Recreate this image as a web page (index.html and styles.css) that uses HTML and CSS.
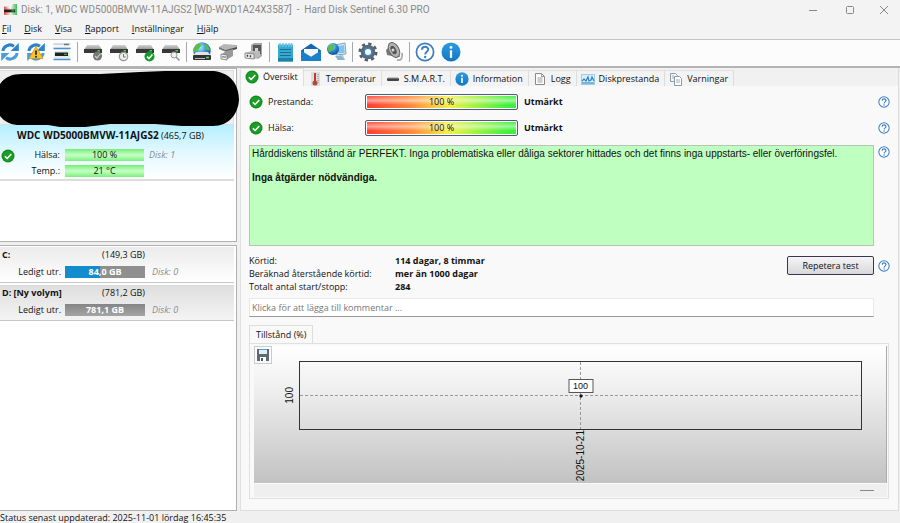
FILE: index.html
```html
<!DOCTYPE html>
<html lang="sv">
<head>
<meta charset="utf-8">
<title>Hard Disk Sentinel 6.30 PRO</title>
<link rel="stylesheet" href="styles.css">
</head>
<body>
<svg class="defs" aria-hidden="true">
  <defs>
    <linearGradient id="gDrive" x1="0" y1="0" x2="0" y2="1"><stop offset="0" stop-color="#d4d4d4"/><stop offset="1" stop-color="#8d8d8d"/></linearGradient>
    <linearGradient id="gBlue" x1="0" y1="0" x2="0" y2="1"><stop offset="0" stop-color="#2f9be0"/><stop offset="1" stop-color="#1277c4"/></linearGradient>
    <radialGradient id="gGlobe" cx=".4" cy=".3" r=".8"><stop offset="0" stop-color="#a9ecff"/><stop offset=".5" stop-color="#2c86cf"/><stop offset="1" stop-color="#0b3f83"/></radialGradient>
    <linearGradient id="gApp" x1="0" y1="0" x2="1" y2="0"><stop offset="0" stop-color="#ef4a4a"/><stop offset=".5" stop-color="#f3ece0"/><stop offset="1" stop-color="#37c05a"/></linearGradient>
  </defs>
  <symbol id="i-sync" viewBox="0 0 20 20">
    <path d="M2.8 9A7.2 7.2 0 0 1 14 4.2" fill="none" stroke="#2b83cb" stroke-width="3"/>
    <path d="M18.8 1v8h-8.2z" fill="#2b83cb"/>
    <path d="M17.2 11A7.2 7.2 0 0 1 6 15.8" fill="none" stroke="#4a9ddb" stroke-width="3"/>
    <path d="M1.2 19v-8h8.2z" fill="#4a9ddb"/>
  </symbol>
  <symbol id="i-drive" viewBox="0 0 20 20">
    <path d="M4 3h12l3 5H1z" fill="url(#gDrive)"/>
    <rect x="1" y="7" width="18" height="4" fill="#383838"/>
    <rect x="14.500" y="8" width="2.500" height="1.500" fill="#35d04a"/>
  </symbol>
  <symbol id="i-ok" viewBox="0 0 14 14">
    <circle cx="7" cy="7" r="6.500" fill="#138a1c"/><circle cx="7" cy="7" r="5.200" fill="#1c9d27"/>
    <path d="M3.800 7.200l2.300 2.200 4.200-4.400" fill="none" stroke="#fff" stroke-width="1.500"/>
  </symbol>
  <symbol id="i-help" viewBox="0 0 20 20">
    <circle cx="10" cy="10" r="8.600" fill="#fff" stroke="#3c7cc0" stroke-width="1.700"/>
    <path d="M7 7.800c0-4 6.200-3.900 6.200-.3 0 2.400-3 2.300-3 5" fill="none" stroke="#3c7cc0" stroke-width="1.900"/><circle cx="10.200" cy="15" r="1.200" fill="#3c7cc0"/>
  </symbol>
  <symbol id="i-info" viewBox="0 0 20 20">
    <circle cx="10" cy="10" r="9.500" fill="url(#gBlue)"/>
    <circle cx="10" cy="5.400" r="1.400" fill="#fff"/><path d="M10 8.300v7.500" stroke="#fff" stroke-width="2.300"/>
  </symbol>
</svg>

<header class="titlebar">
  <svg class="app-icon" viewBox="0 0 14 14"><path d="M0 4l9-3h5v12H0z" fill="url(#gApp)"/><path d="M1 4l3-2 6-1-3 5z" fill="#fff" opacity=".6"/><rect y="7" width="12" height="3" fill="#222"/><path d="M8 8.500h3" stroke="#46d35a"/></svg>
  <h1 class="title">Disk: 1, WDC WD5000BMVW-11AJGS2 [WD-WXD1A24X3587]&nbsp; -&nbsp; Hard Disk Sentinel 6.30 PRO</h1>
  <div class="window-controls">
    <button type="button" aria-label="Minimera"><svg viewBox="0 0 10 10"><path d="M1 5.500h8"/></svg></button>
    <button type="button" aria-label="Maximera"><svg viewBox="0 0 10 10"><rect x="1.500" y="1.500" width="7" height="7" rx="1"/></svg></button>
    <button type="button" aria-label="Stäng"><svg viewBox="0 0 10 10"><path d="M1 1l8 8M9 1L1 9"/></svg></button>
  </div>
</header>

<nav class="menubar">
  <button type="button"><u>F</u>il</button>
  <button type="button"><u>D</u>isk</button>
  <button type="button"><u>V</u>isa</button>
  <button type="button"><u>R</u>apport</button>
  <button type="button"><u>I</u>nställningar</button>
  <button type="button"><u>H</u>jälp</button>
</nav>

<div class="toolbar" role="toolbar">
  <div class="tools">
    <button type="button" aria-label="Uppdatera"><svg viewBox="0 0 20 20"><use href="#i-sync"/></svg></button>
    <button type="button" aria-label="Uppdatera varningar"><svg viewBox="0 0 20 20"><use href="#i-sync"/><path d="M10 4.500l7 12H3z" fill="#fbc22d" stroke="#d99a12" stroke-width=".8" stroke-linejoin="round"/><path d="M10 8.500v4.200" stroke="#222" stroke-width="1.700"/><circle cx="10" cy="14.700" r="1" fill="#222"/></svg></button>
    <button type="button" aria-label="Disköversikt"><svg viewBox="0 0 20 20"><rect x="1.500" y="1" width="17" height="6" fill="#f4f6f8"/><path d="M1.500 2h17" stroke="#b5bcc4"/><path d="M1.500 6.500h17" stroke="#4a93cf" stroke-width="1.600"/><path d="M12 2.500h5" stroke="#777" stroke-width="1.500"/><rect x="2" y="9" width="16" height="8" fill="#e8e8e8"/><rect x="3" y="10.500" width="13" height="3.500" fill="#1c2420"/><path d="M12 12.300h3" stroke="#38d251"/><path d="M1.500 17.500h17" stroke="#4a93cf" stroke-width="1.500"/></svg></button>
  </div>
  <div class="tools">
    <button type="button" aria-label="Ytkontroll"><svg viewBox="0 0 20 20"><use href="#i-drive"/><circle cx="14.500" cy="14" r="4.500" fill="#777"/><path d="M12 14l2 2 3.500-4.500" fill="none" stroke="#ccc" stroke-width="1.200"/></svg></button>
    <button type="button" aria-label="Schemalagt test"><svg viewBox="0 0 20 20"><use href="#i-drive"/><circle cx="14.500" cy="14.500" r="4.200" fill="#eee" stroke="#999" stroke-width="1.200"/><path d="M14.500 12v3h2.200" fill="none" stroke="#777"/></svg></button>
    <button type="button" aria-label="Testa disk"><svg viewBox="0 0 20 20"><use href="#i-drive"/><circle cx="14.500" cy="14.500" r="5" fill="#13992a"/><path d="M12 14.600l2 2 3.400-4" fill="none" stroke="#fff" stroke-width="1.500"/></svg></button>
    <button type="button" aria-label="Undersök disk"><svg viewBox="0 0 20 20"><use href="#i-drive"/><circle cx="13" cy="13" r="3" fill="#eee" stroke="#999"/><path d="M15 15l3.500 3.500" stroke="#999" stroke-width="1.700"/></svg></button>
  </div>
  <div class="tools">
    <button type="button" aria-label="Nätverksdisk"><svg viewBox="0 0 20 20"><circle cx="10" cy="9" r="8.700" fill="url(#gGlobe)"/><path d="M4 3c3-2 6-1 5 1S6 7 5 9s-3 1-4-1zM12 2c3 0 5 3 6 6-3 1-5-1-4-3z" fill="#5bbf43"/><path d="M4 10h12l3 4H1z" fill="#e3e3e3"/><rect x="1" y="13" width="18" height="5" rx="1" fill="#333"/><path d="M3 16.500h10" stroke="#bbb"/><path d="M14 15.500h3" stroke="#4be05f" stroke-width="1.500"/></svg></button>
    <button type="button" aria-label="Anslut disk"><svg viewBox="0 0 20 20"><path d="M1 5l5-3 13 1v3L8 8z" fill="#b5b5b5"/><path d="M1 5l7 3v2L1 7z" fill="#777"/><path d="M8 8l11-3v2L8 10z" fill="#4c4c4c"/><path d="M4 12l4-3 7-2v7l-7 4-4-2z" fill="#9a9a9a"/><path d="M3 12l6 1v5l-6-1z" fill="#eee" stroke="#777" stroke-width=".8"/><path d="M5 14v1.500M7 14.300v1.500" stroke="#333"/></svg></button>
    <button type="button" aria-label="Koppla från disk"><svg viewBox="0 0 20 20"><path d="M7 3l3-2h8v13l-4 3-7-3z" fill="#a5a5a5"/><path d="M9 3h8v9H9z" fill="#555"/><path d="M11 6h3v5h-3z" fill="#d5d5d5"/><path d="M1 11l6-2h9v5l-5 3-10-1z" fill="#bbb"/><path d="M1 11l9 1v5l-9-1z" fill="#eee" stroke="#777" stroke-width=".8"/><path d="M3.500 12.800v2M6.500 13.300v2" stroke="#333" stroke-width="1.400"/></svg></button>
  </div>
  <div class="tools">
    <button type="button" aria-label="Rapport"><svg viewBox="0 0 20 20"><rect x="3" y="2.500" width="15" height="17" fill="#35a9d0"/><rect x="3" y="16" width="15" height="3.500" fill="#1c83a8"/><path d="M5 7.500h11M5 10.500h11M5 13.500h11" stroke="#1a6f8f" stroke-width="1.200"/><path d="M5 1v4M8 1v4M11 1v4M14 1v4M16.500 1v4" stroke="#70c5df" stroke-width="1.400"/></svg></button>
    <button type="button" aria-label="Skicka e-post"><svg viewBox="0 0 20 20"><path d="M0 8.500l10-7 10 7V19H0z" fill="#1568ad"/><path d="M3 7h14v8H3z" fill="#f5f8fa"/><path d="M0 8.500l10 6.300 10-6.300V19H0z" fill="#1c80c9"/></svg></button>
    <button type="button" aria-label="Fjärrövervakning"><svg viewBox="0 0 20 20"><path d="M8 3l10-2 1 11-10 1z" fill="#dce9f2" stroke="#7fa7c4"/><path d="M9.500 4.300l7.500-1.400.7 7.800-7.500.8z" fill="#7dc3ef"/><path d="M12 13h4l2 5h-8z" fill="#b8c7d2"/><circle cx="6" cy="7" r="6" fill="url(#gGlobe)"/><path d="M2 4c3-3 6-2 5 1S4 9 3 10 0 7 2 4z" fill="#5bbf43"/><path d="M8 14h6l4 4h-7z" fill="#8ab3d1"/></svg></button>
  </div>
  <div class="tools">
    <button type="button" aria-label="Inställningar"><svg viewBox="0 0 20 20"><circle cx="10" cy="10" r="8" fill="none" stroke="#52606c" stroke-width="3" stroke-dasharray="3.140 3.140"/><circle cx="10" cy="10" r="7.300" fill="#5b6a77"/><circle cx="10" cy="10" r="4.500" fill="#3c87c7"/><circle cx="10" cy="10" r="3" fill="#fff"/></svg></button>
    <button type="button" aria-label="Ljud"><svg viewBox="0 0 20 20"><path d="M2 8l7-7 7 14-8-1-5-1z" fill="#777"/><ellipse cx="10" cy="8" rx="5" ry="8" transform="rotate(-28 10 8)" fill="#b4b4b4" stroke="#666"/><ellipse cx="9.500" cy="8" rx="2.500" ry="4.500" transform="rotate(-28 9.500 8)" fill="#555"/><circle cx="9" cy="8" r="1.500" fill="#ddd"/><path d="M13 18c4 1 6-2 5-7" fill="none" stroke="#aaa" stroke-width="1.800"/></svg></button>
  </div>
  <div class="tools">
    <button type="button" aria-label="Hjälp"><svg viewBox="0 0 20 20"><use href="#i-help"/></svg></button>
    <button type="button" aria-label="Om programmet"><svg viewBox="0 0 20 20"><use href="#i-info"/></svg></button>
  </div>
</div>

<div class="workspace">
  <aside class="sidebar">
    <section class="list disks">
      <div class="disk disk-hidden">
        <svg class="cover" viewBox="0 0 239 58" preserveAspectRatio="none"><path d="M0 14C5 7 12 4 22 4L100 4 140 2 165 1H214C231 3 239 15 239 30 238 44 229 56 213 56H182L155 54 110 54 85 57H60L48 55H17C9 54 4 51 0 46z"/></svg>
      </div>
      <div class="disk disk-selected">
        <p class="disk-name"><b>WDC WD5000BMVW-11AJGS2</b> (465,7 GB)</p>
        <div class="disk-info">
          <svg class="ok" viewBox="0 0 14 14"><use href="#i-ok"/></svg>
          <span class="key">Hälsa:</span><span class="meter good">100 %</span><i>Disk: 1</i>
          <span class="key temp">Temp.:</span><span class="meter good">21 °C</span>
        </div>
      </div>
    </section>
    <section class="list volumes">
      <div class="volume">
        <div class="volume-row"><b>C:</b><span>(149,3 GB)</span></div>
        <div class="volume-row"><span class="key">Ledigt utr.</span><span class="meter space space-c">84,0 GB</span><i>Disk: 0</i></div>
      </div>
      <div class="volume volume-alt">
        <div class="volume-row"><b>D: [Ny volym]</b><span>(781,2 GB)</span></div>
        <div class="volume-row"><span class="key">Ledigt utr.</span><span class="meter space">781,1 GB</span><i>Disk: 0</i></div>
      </div>
    </section>
  </aside>

  <main class="pane">
    <div class="tabs" role="tablist">
      <button type="button" role="tab" aria-selected="true" class="tab active"><svg viewBox="0 0 14 14"><use href="#i-ok"/></svg>Översikt</button>
      <button type="button" role="tab" class="tab"><svg viewBox="0 0 14 14"><rect x="3" width="9" height="14" fill="#ddd"/><path d="M7 1v8" stroke="#c0392b" stroke-width="2"/><circle cx="7" cy="11" r="2.500" fill="#b5483c"/><path d="M10 2v10" stroke="#888" stroke-dasharray="1 1"/></svg>Temperatur</button>
      <button type="button" role="tab" class="tab"><svg viewBox="0 0 14 14"><rect x="1" y="6" width="12" height="3" rx="1" fill="#444"/><path d="M2 6h10" stroke="#999"/></svg>S.M.A.R.T.</button>
      <button type="button" role="tab" class="tab"><svg viewBox="0 0 20 20"><use href="#i-info"/></svg>Information</button>
      <button type="button" role="tab" class="tab"><svg viewBox="0 0 14 14"><path d="M2.500 1.500h6l3 3v8h-9z" fill="#fff" stroke="#888"/><path d="M8.500 1.500v3h3M4.500 6h5M4.500 8h5M4.500 10h5" fill="none" stroke="#999"/></svg>Logg</button>
      <button type="button" role="tab" class="tab"><svg viewBox="0 0 14 14"><rect x=".5" y="2.500" width="13" height="10" fill="#d6eefa" stroke="#a4cde3"/><path d="M1 9l2-2 2 2 2-4 1 4 2-1 1-3 2 4" fill="none" stroke="#2b83bb" stroke-width="1.200"/><path d="M1 10h12v2H1z" fill="#74b7dd"/></svg>Diskprestanda</button>
      <button type="button" role="tab" class="tab"><svg viewBox="0 0 14 14"><path d="M1.500 1.500h5l2 2v6h-7z" fill="#f4f7fa" stroke="#8d99a5"/><path d="M5.500 4.500h5l2 2v7h-7z" fill="#fff" stroke="#8d99a5"/><path d="M7 8h4M7 10h4M3 4h2M3 6h2" stroke="#8fb0cc"/></svg>Varningar</button>
    </div>

    <div class="overview">
      <div class="row score">
        <svg class="ok" viewBox="0 0 14 14"><use href="#i-ok"/></svg>
        <span class="score-name">Prestanda:</span><span class="gauge">100 %</span><b>Utmärkt</b>
        <button type="button" class="help" aria-label="Hjälp om prestanda"><svg viewBox="0 0 20 20"><use href="#i-help"/></svg></button>
      </div>
      <div class="row score">
        <svg class="ok" viewBox="0 0 14 14"><use href="#i-ok"/></svg>
        <span class="score-name">Hälsa:</span><span class="gauge">100 %</span><b>Utmärkt</b>
        <button type="button" class="help" aria-label="Hjälp om hälsa"><svg viewBox="0 0 20 20"><use href="#i-help"/></svg></button>
      </div>
      <div class="row report">
        <div class="report-text">
          <p>Hårddiskens tillstånd är PERFEKT. Inga problematiska eller dåliga sektorer hittades och det finns inga uppstarts- eller överföringsfel.</p>
          <p><b>Inga åtgärder nödvändiga.</b></p>
        </div>
        <button type="button" class="help" aria-label="Hjälp om tillstånd"><svg viewBox="0 0 20 20"><use href="#i-help"/></svg></button>
      </div>
      <div class="row facts-row">
        <dl class="facts">
          <dt>Körtid:</dt><dd>114 dagar, 8 timmar</dd>
          <dt>Beräknad återstående körtid:</dt><dd>mer än 1000 dagar</dd>
          <dt>Totalt antal start/stopp:</dt><dd>284</dd>
        </dl>
        <div class="test-actions">
          <button type="button" class="retest">Repetera test</button>
          <button type="button" class="help" aria-label="Hjälp om test"><svg viewBox="0 0 20 20"><use href="#i-help"/></svg></button>
        </div>
      </div>
      <input class="comment" type="text" aria-label="Kommentar" placeholder="Klicka för att lägga till kommentar ...">

      <section class="history">
        <button type="button" class="history-tab">Tillstånd (%)</button>
        <div class="history-panel">
          <div class="chart">
            <button type="button" class="save" aria-label="Spara diagram"><svg viewBox="0 0 14 14"><path d="M1 1h12v12H1z" fill="#5d6a75"/><path d="M3 1h8v5H3z" fill="#e3eef4"/><path d="M3 1.500h8" stroke="#4b9fc6"/><path d="M4 9h6v4H4z" fill="#fff"/><path d="M5 10h2v3H5z" fill="#4b5a66"/></svg></button>
            <span class="y-label">100</span>
            <div class="plot">
              <span class="value">100</span>
              <span class="point"></span>
            </div>
            <span class="x-label">2025-10-21</span>
          </div>
          <div class="strip"><span class="grip"></span></div>
        </div>
      </section>
    </div>
  </main>
</div>

<footer class="statusbar">Status senast uppdaterad: 2025-11-01 lördag 16:45:35</footer>
</body>
</html>
```
FILE: styles.css
```css
* { box-sizing: border-box; }

body {
  margin: 0;
  height: 100vh;
  display: flex;
  flex-direction: column;
  overflow: hidden;
  background: #f0f0f0;
  color: #111;
  font: 9px/12px "Open Sans", sans-serif;
}

p, h1, dl, dd { margin: 0; }

button {
  padding: 0;
  border: 0;
  background: none;
  color: inherit;
  font: inherit;
}

svg { display: block; flex: none; }
.defs { position: absolute; width: 0; height: 0; }
.ok { width: 14px; height: 14px; }

/* Window frame */
.titlebar {
  display: flex;
  align-items: center;
  gap: 4px;
  height: 19px;
  padding-left: 4px;
  background: #f3f3f3;
}
.app-icon { width: 13px; height: 13px; }
.title {
  flex: 1;
  color: #8a8a8a;
  font-family: Roboto, sans-serif;
  font-size: 10px;
  font-weight: 400;
  line-height: 16px;
}
.window-controls { display: flex; }
.window-controls button {
  width: 37px;
  height: 19px;
  display: grid;
  place-items: center;
}
.window-controls button:last-child { width: 32px; }
.window-controls svg {
  width: 10px;
  height: 10px;
  fill: none;
  stroke: #888;
}

.menubar {
  display: flex;
  gap: 13px;
  height: 20px;
  padding-left: 2px;
  background: #f3f3f3;
}
.menubar button { white-space: nowrap; }

.toolbar {
  display: flex;
  align-items: center;
  height: 29px;
  padding-bottom: 2px;
  border-top: 1px solid #c4c4c4;
  border-bottom: 2px solid #b4b4b4;
  background: #fcfcfc;
}
.tools { display: flex; gap: 6px; }
.tools + .tools {
  margin-left: 5px;
  padding-left: 5px;
  border-left: 1px solid #a8a8a8;
}
.tools svg { width: 20px; height: 20px; }

.workspace {
  flex: 1;
  min-height: 0;
  display: flex;
}

/* Disk and volume lists */
.sidebar {
  flex: none;
  width: 241px;
  display: flex;
  flex-direction: column;
  gap: 3px;
  padding-right: 3px;
  border-right: 1px solid #e0e0e0;
}
.list {
  padding: 1px 2px 0 0;
  border: 1px solid #b0b0b0;
  border-left: 0;
  background: #fff;
}
.disks { flex: 173 1 0; }
.volumes { flex: 267 1 0; }
.disk-hidden {
  position: relative;
  height: 55px;
  border: 1px solid #ddd;
  border-left: 0;
  background: #eee;
}
.cover {
  position: absolute;
  top: -1px;
  left: 0;
  width: 239px;
  height: 58px;
}
.disk-selected {
  height: 56px;
  padding-top: 4px;
  border-bottom: 2px solid #ddd;
  background: linear-gradient(#b4efff, #e2f8ff 50%, #fff);
}
.disk-name {
  margin-bottom: 7px;
  padding-left: 17px;
  white-space: nowrap;
}
.disk-name b { font-size: 10px; }
.disk-info {
  display: grid;
  grid-template-columns: 14px 40px 79px 1fr;
  column-gap: 5px;
  row-gap: 4px;
  padding-left: 1px;
}
.disk-info .ok { grid-row: 1 / 3; }
.disk-info .key { margin-left: -5px; }
.temp { grid-column: 2; }
.key { text-align: right; }
.sidebar i { color: #8c8c8c; }

.meter {
  height: 12px;
  text-align: center;
}
.good { background: linear-gradient(#75ec75, #c6ffc6 50%, #7cf07c); }
.space {
  background: linear-gradient(#858585, #a5a5a5);
  color: #fff;
  font-weight: 700;
}
.space-c { background: linear-gradient(90deg, #138bcd 44%, #8f8f8f 44%); }

.volume {
  height: 36px;
  margin-bottom: 2px;
  padding-top: 2px;
  border-bottom: 1px solid #c8c8c8;
  background: linear-gradient(#ebebeb, #fff);
}
.volume-alt { background: linear-gradient(#dedede, #f4f4f4); }
.volume-row {
  display: grid;
  grid-template-columns: 59px 80px 1fr;
  column-gap: 4px;
  margin-bottom: 5px;
  padding-left: 2px;
  white-space: nowrap;
}
.volume-row i { margin-left: 3px; }
.volume-row span:last-child { text-align: right; }

/* Main pane */
.pane {
  flex: 1;
  min-width: 0;
  margin-right: 1px;
  display: flex;
  flex-direction: column;
  border-right: 1px solid #ddd;
  border-bottom: 1px solid #ddd;
  background: #f9f9f9;
}
.tabs {
  display: flex;
  align-items: flex-end;
  height: 18px;
  background: #f1f1f1;
}
.tab {
  display: flex;
  align-items: center;
  gap: 4px;
  height: 16px;
  padding: 0 5px 0 4px;
  border-right: 1px solid #ddd;
  border-top: 1px solid #e2e2e2;
  background: #f3f3f3;
  white-space: nowrap;
}
.tab svg { width: 14px; height: 14px; }
.tab.active {
  height: 18px;
  padding-bottom: 2px;
  background: #f9f9f9;
}

.overview {
  flex: 1;
  min-height: 0;
  display: flex;
  flex-direction: column;
  padding: 7px 8px 11px 8px;
}
.row {
  display: flex;
  gap: 4px;
}
.help svg { width: 12px; height: 12px; }
.score {
  align-items: center;
  gap: 5px;
  height: 18px;
  margin-bottom: 8px;
}
.score .help { margin-left: auto; }
.score-name { width: 92px; }
.gauge {
  width: 153px;
  height: 16px;
  border: 1px solid #4a6070;
  border-radius: 2px;
  background:
    linear-gradient(rgba(255, 255, 255, 0), rgba(255, 255, 255, .5) 40%, rgba(255, 255, 255, 0) 70%),
    linear-gradient(90deg, #ff3b30, #ff8a3c 30%, #f2f24a 55%, #3cf03c 95%);
  box-shadow: inset 0 0 0 1px #fff;
  line-height: 14px;
  text-align: center;
}
.score b { margin-left: 1px; }

.report-text {
  flex: 1;
  height: 101px;
  padding: 2px;
  border: 1px solid #b5c4b5;
  background: #bfffbf;
  font-family: "Liberation Sans", sans-serif;
  font-size: 10px;
}
.report-text p + p { margin-top: 12px; }
.report .help {
  align-self: flex-start;
  margin-top: 1px;
}

.facts-row {
  align-items: flex-start;
  margin: 8px 0 5px;
}
.facts {
  flex: 1;
  display: grid;
  grid-template-columns: 146px 1fr;
  line-height: 13px;
}
.facts dd { font-weight: 700; }
.test-actions {
  display: flex;
  align-items: center;
  gap: 4px;
  margin-top: 2px;
}
.retest {
  width: 87px;
  height: 19px;
  border: 1px solid #3c3450;
  border-radius: 2px;
  background: linear-gradient(#f5f5f5, #d8d8dc);
}

.comment {
  height: 19px;
  margin-right: 16px;
  padding: 0 2px;
  border: 1px solid #e8e8e8;
  border-bottom-color: #999;
  background: #fff;
  font: inherit;
}
.comment::placeholder { color: #777; opacity: 1; }

.history {
  flex: 1;
  min-height: 0;
  display: flex;
  flex-direction: column;
  align-items: flex-start;
  margin: 8px 1px 0 0;
}
.history-tab {
  height: 18px;
  padding: 0 6px;
  border: 1px solid #ddd;
  border-bottom: 0;
  white-space: nowrap;
}
.history-panel {
  flex: 1;
  align-self: stretch;
  display: flex;
  flex-direction: column;
  padding: 2px 1px 1px 4px;
  border: 1px solid #e0e0e0;
}
.chart {
  position: relative;
  flex: 1;
  display: grid;
  grid-template-columns: 42px 3px 1fr 24px;
  grid-template-rows: 15px 1fr 53px;
  border-right: 1px solid #aaa;
  background: linear-gradient(#fff, #f0f0f0 30%, #c2c2c2);
  font-family: "Liberation Sans", sans-serif;
  font-size: 10px;
}
.save {
  position: absolute;
  top: 0;
  left: 0;
  padding: 1px;
  border: 1px solid #ccc;
}
.save svg { width: 14px; height: 14px; }
.y-label, .x-label {
  writing-mode: vertical-rl;
  transform: rotate(180deg);
  white-space: nowrap;
}
.y-label { grid-area: 2 / 1; place-self: center end; }
.x-label { grid-area: 3 / 3; place-self: start center; }
.plot {
  position: relative;
  grid-area: 2 / 3;
  border: 1px solid #333;
  background:
    repeating-linear-gradient(90deg, #999 0 3px, transparent 3px 5px) center / 100% 1px no-repeat,
    repeating-linear-gradient(#999 0 3px, transparent 3px 5px) center / 1px 100% no-repeat;
}
.value {
  position: absolute;
  bottom: 50%;
  left: 50%;
  width: 25px;
  margin-bottom: 3px;
  border: 1px solid #555;
  background: #fff;
  font-size: 9px;
  transform: translateX(-50%);
  text-align: center;
}
.point {
  position: absolute;
  top: 50%;
  left: 50%;
  width: 3px;
  height: 3px;
  background: #112;
  border-radius: 1px;
  transform: translate(-50%, -50%);
}
.strip {
  display: flex;
  justify-content: flex-end;
  align-items: center;
  height: 13px;
  margin-top: 1px;
  padding-right: 13px;
  background: #efefef;
}
.grip { width: 14px; border-top: 1px solid #888; }

.statusbar {
  flex: none;
  height: 12px;
  padding-top: 1px;
  white-space: nowrap;
}
```
